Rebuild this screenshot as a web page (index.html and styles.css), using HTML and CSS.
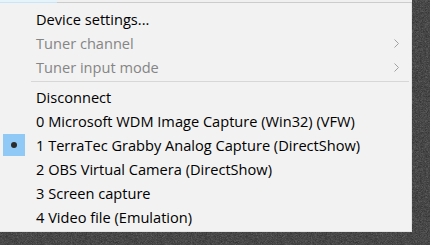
FILE: index.html
```html
<!DOCTYPE html>
<html lang="en">
  <head>
    <meta charset="UTF-8" />
    <title>Capture device menu</title>
    <link rel="stylesheet" href="styles.css">
  </head>
  <body>
    <div class="frame">
      <div class="top-edge">
        <div class="button-edge"></div>
        <div class="bar-edge"></div>
      </div>

      <div class="menu">
        <div class="item">Device settings...</div>
        <div class="item disabled">
          <span>Tuner channel</span>
          <svg class="chevron" width="5" height="9" viewBox="0 0 5 9"><polyline points="0.5,0.5 4.5,4.5 0.5,8.5" /></svg>
        </div>
        <div class="item disabled">
          <span>Tuner input mode</span>
          <svg class="chevron" width="5" height="9" viewBox="0 0 5 9"><polyline points="0.5,0.5 4.5,4.5 0.5,8.5" /></svg>
        </div>

        <div class="separator"></div>

        <div class="item">Disconnect</div>
        <div class="item">0 Microsoft WDM Image Capture (Win32) (VFW)</div>
        <div class="item checked">
          <span class="check"><span class="dot"></span></span>
          1 TerraTec Grabby Analog Capture (DirectShow)
        </div>
        <div class="item">2 OBS Virtual Camera (DirectShow)</div>
        <div class="item">3 Screen capture</div>
        <div class="item">4 Video file (Emulation)</div>
      </div>
    </div>
  </body>
</html>
```

FILE: styles.css
```css
* {
  margin: 0;
  padding: 0;
  box-sizing: border-box;
}

body {
  font-family: 'Open Sans', 'Noto Sans', sans-serif;
  font-size: 14.6px;
  color: #000;
  background-color: #262626;
  background-image: url("data:image/svg+xml;utf8,<svg xmlns='http://www.w3.org/2000/svg' width='120' height='120'><filter id='n'><feTurbulence type='fractalNoise' baseFrequency='2.2' numOctaves='1' stitchTiles='stitch'/><feColorMatrix type='saturate' values='0'/><feComponentTransfer><feFuncA type='linear' slope='0.45'/></feComponentTransfer></filter><rect width='120' height='120' filter='url(%23n)'/></svg>");
  height: 245px;
  overflow: hidden;
}

.frame {
  width: 412px;
}

.top-edge {
  display: flex;
  height: 3px;
}

.button-edge {
  width: 57px;
  background: #e5f3fb;
  border-bottom: 1px solid #cce4f7;
}

.bar-edge {
  flex: 1;
  background: #f0f0f0;
  border-bottom: 1px solid #cccccc;
}

.menu {
  background: #f2f2f2;
  border-right: 1px solid #e2e2e2;
  border-bottom: 1px solid #e2e2e2;
  padding: 4px 0 2px;
}

.item {
  position: relative;
  display: flex;
  align-items: center;
  height: 24px;
  padding-left: 36px;
  white-space: nowrap;
}

.item.disabled {
  color: #858585;
}

.chevron {
  position: absolute;
  right: 12px;
  top: 8px;
}

.chevron polyline {
  fill: none;
  stroke: #a0a0a0;
  stroke-width: 1;
}

.separator {
  height: 6px;
  margin: 0 2px 0 31px;
  position: relative;
}

.separator::after {
  content: "";
  position: absolute;
  left: 0;
  right: 0;
  top: 2px;
  height: 1px;
  background: #d7d7d7;
}

.check {
  position: absolute;
  left: 3px;
  top: 1px;
  width: 22px;
  height: 22px;
  background: #90c8f6;
  display: flex;
  align-items: center;
  justify-content: center;
}

.dot {
  width: 6px;
  height: 6px;
  border-radius: 50%;
  background: #2b2b2b;
}
```
